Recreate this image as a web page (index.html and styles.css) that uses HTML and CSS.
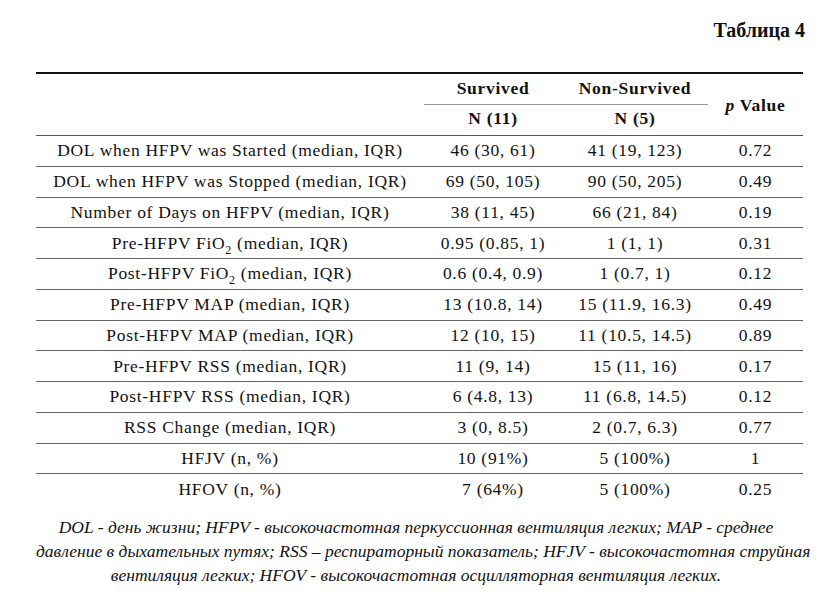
FILE: index.html
```html
<!DOCTYPE html>
<html>
<head>
  <meta charset="utf-8">
  <link rel="stylesheet" href="styles.css">
</head>
<body>
  <div class="page">
    <div class="caption">Таблица 4</div>

    <table class="stats">
      <colgroup>
        <col class="col-label">
        <col class="col-surv">
        <col class="col-non">
        <col class="col-p">
      </colgroup>
      <thead>
        <tr class="head-top">
          <th rowspan="2"></th>
          <th class="group">Survived</th>
          <th class="group">Non-Survived</th>
          <th rowspan="2" class="pval"><i>p</i> Value</th>
        </tr>
        <tr class="head-bottom">
          <th>N (11)</th>
          <th>N (5)</th>
        </tr>
      </thead>
      <tbody>
        <tr><td>DOL when HFPV was Started (median, IQR)</td><td>46 (30, 61)</td><td>41 (19, 123)</td><td>0.72</td></tr>
        <tr><td>DOL when HFPV was Stopped (median, IQR)</td><td>69 (50, 105)</td><td>90 (50, 205)</td><td>0.49</td></tr>
        <tr><td>Number of Days on HFPV (median, IQR)</td><td>38 (11, 45)</td><td>66 (21, 84)</td><td>0.19</td></tr>
        <tr><td>Pre-HFPV FiO<sub>2</sub> (median, IQR)</td><td>0.95 (0.85, 1)</td><td>1 (1, 1)</td><td>0.31</td></tr>
        <tr><td>Post-HFPV FiO<sub>2</sub> (median, IQR)</td><td>0.6 (0.4, 0.9)</td><td>1 (0.7, 1)</td><td>0.12</td></tr>
        <tr><td>Pre-HFPV MAP (median, IQR)</td><td>13 (10.8, 14)</td><td>15 (11.9, 16.3)</td><td>0.49</td></tr>
        <tr><td>Post-HFPV MAP (median, IQR)</td><td>12 (10, 15)</td><td>11 (10.5, 14.5)</td><td>0.89</td></tr>
        <tr><td>Pre-HFPV RSS (median, IQR)</td><td>11 (9, 14)</td><td>15 (11, 16)</td><td>0.17</td></tr>
        <tr><td>Post-HFPV RSS (median, IQR)</td><td>6 (4.8, 13)</td><td>11 (6.8, 14.5)</td><td>0.12</td></tr>
        <tr><td>RSS Change (median, IQR)</td><td>3 (0, 8.5)</td><td>2 (0.7, 6.3)</td><td>0.77</td></tr>
        <tr><td>HFJV (n, %)</td><td>10 (91%)</td><td>5 (100%)</td><td>1</td></tr>
        <tr class="last"><td>HFOV (n, %)</td><td>7 (64%)</td><td>5 (100%)</td><td>0.25</td></tr>
      </tbody>
    </table>

    <p class="note">
      DOL - день жизни; HFPV - высокочастотная перкуссионная вентиляция легких; MAP - среднее<br>
      давление в дыхательных путях; RSS – респираторный показатель; HFJV - высокочастотная струйная<br>
      вентиляция легких; HFOV - высокочастотная осцилляторная вентиляция легких.
    </p>
  </div>
</body>
</html>
```

FILE: styles.css
```css
body {
  margin: 0;
  background: #fff;
  color: #111;
}

.page {
  width: 767px;
  padding: 17px 0 0 36px;
}

.caption {
  font-family: "Liberation Serif", serif;
  font-weight: bold;
  font-size: 20px;
  text-align: right;
  margin-right: -2px;
  line-height: 26px;
  height: 30px;
}

.stats {
  width: 767px;
  margin-top: 25px;
  border-collapse: collapse;
  border-top: 2px solid #111;
  font-family: "Liberation Serif", serif;
  font-size: 17.5px;
  letter-spacing: 0.7px;
  table-layout: fixed;
}

.col-label { width: 388px; }
.col-surv { width: 138px; }
.col-non { width: 146px; }
.col-p { width: 95px; }

.stats th,
.stats td {
  padding: 0;
  text-align: center;
  font-weight: normal;
}

.stats th {
  font-weight: bold;
}

.head-top th {
  height: 28px;
  padding-bottom: 2px;
}

.head-top .group {
  border-bottom: 1px solid #999;
}

.head-top .pval {
  padding: 2px 0 0;
}

.head-bottom th {
  height: 27px;
  padding-bottom: 3px;
}

.stats thead {
  border-bottom: 1px solid #555;
}

.stats td {
  height: 29.75px;
  border-bottom: 1px solid #666;
}

.stats tr.last td {
  border-bottom: none;
}

.stats sub {
  font-size: 12px;
  line-height: 0;
}

.note {
  margin: 11px 0 0;
  padding-right: 7px;
  font-family: "Liberation Serif", serif;
  font-style: italic;
  font-size: 17.5px;
  line-height: 24px;
  text-align: center;
  white-space: nowrap;
}
```
